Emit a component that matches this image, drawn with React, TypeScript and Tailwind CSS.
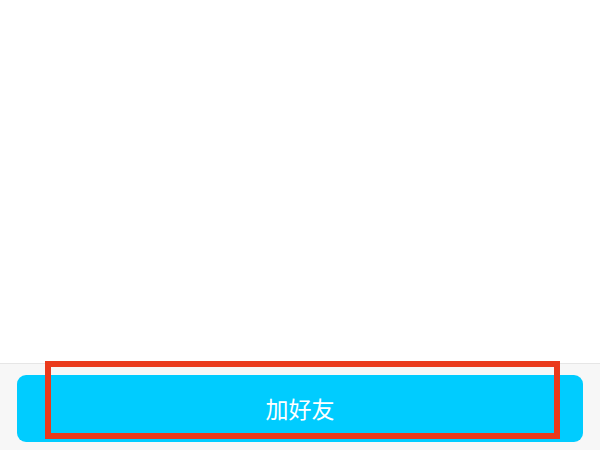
import React from 'react';

const App = () => {
  return (
    <div className="w-[600px] h-[450px] flex flex-col bg-white overflow-hidden font-['Noto_Sans_CJK_SC',sans-serif]">
      {/* Content area */}
      <div className="flex-1 bg-white" />

      {/* Bottom action bar */}
      <div className="relative border-t border-[#e6e6e6] bg-[#f7f7f7] px-[17px] pt-[11px] pb-[8px]">
        <button className="w-full h-[67px] rounded-[9px] bg-[#00ccff] text-white text-[23px] flex items-center justify-center">
          加好友
        </button>

        {/* Highlight annotation */}
        <div className="absolute left-[45px] top-[-3px] w-[515px] h-[78px] border-[6px] border-[#ea3a1c] pointer-events-none" />
      </div>
    </div>
  );
};

export default App;
